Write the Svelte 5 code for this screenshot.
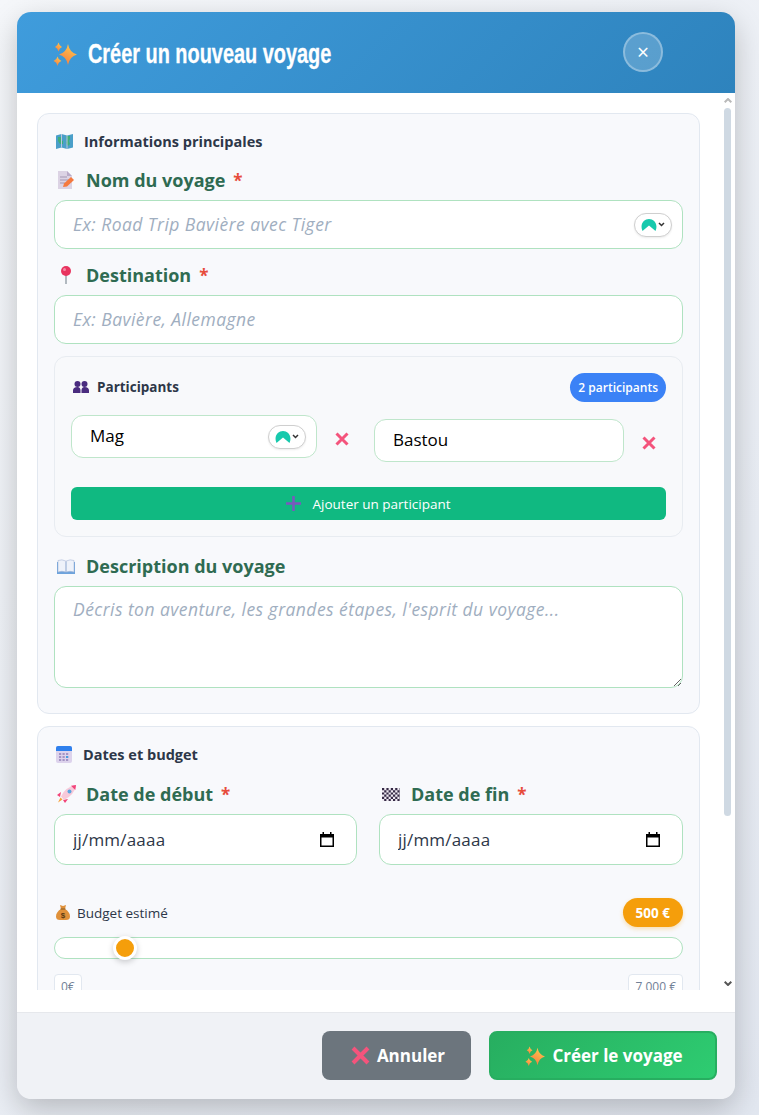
<script>
  let name = $state('');
  let destination = $state('');
  let description = $state('');
  let participants = $state(['Mag', 'Bastou']);
  let budget = $state(500);

  function removeParticipant(index) {
    participants = participants.filter((_, i) => i !== index);
  }
</script>

{#snippet sparkles(size)}
  <svg width={size} height={size} viewBox="0 0 24 24" aria-hidden="true">
    <defs>
      <linearGradient id="spark" x1="0.7" y1="0" x2="0.2" y2="1">
        <stop offset="0" stop-color="#ffc94f" />
        <stop offset="1" stop-color="#f5793f" />
      </linearGradient>
    </defs>
    <path fill="url(#spark)" d="M15 2Q16.500 10.500 24 12.500Q16.500 14.500 15 23Q13.500 14.500 6 12.500Q13.500 10.500 15 2Z" />
    <path fill="url(#spark)" d="M5.500 0.500Q6.300 4 9 5Q6.300 6 5.500 9.500Q4.700 6 2 5Q4.700 4 5.500 0.500Z" />
    <path fill="url(#spark)" d="M4.500 14.500Q5.300 18 8.500 19Q5.300 20 4.500 24Q3.700 20 0.500 19Q3.700 18 4.500 14.500Z" />
  </svg>
{/snippet}

{#snippet mapIcon()}
  <svg width="17" height="15" viewBox="0 0 17 15" aria-hidden="true">
    <path fill="#4a9fc9" d="M0 1.500 5.500 0 11 1.500 17 0V13.500L11 15 5.500 13.500 0 15Z" />
    <path fill="#3fae7a" d="M2 3h3v3l2 1v3H4L2 7ZM10 2h4v3l-1 2 1 3-2 2-2-3 1-3Z" />
    <path fill="#b9c6dd" d="M5 0h1v13.500H5ZM10.500 1.500h1V15h-1Z" />
  </svg>
{/snippet}

{#snippet memoIcon()}
  <svg width="16" height="18" viewBox="0 0 16 18" aria-hidden="true">
    <path fill="#dcd3e4" d="M0 0H9L14 5V18H0Z" />
    <path fill="#b9abc8" d="M9 0 14 5H9Z" />
    <path stroke="#a497b3" stroke-width="1" d="M2 6H9M2 9H11M2 12H7" />
    <path fill="#f5793f" d="M5 16 6 12.500 13 6 16 9 9 15.500Z" />
  </svg>
{/snippet}

{#snippet pinIcon()}
  <svg width="14" height="18" viewBox="0 0 14 18" aria-hidden="true">
    <path stroke="#9aa3ad" stroke-width="1.500" d="M7 8V18" />
    <circle cx="7" cy="5" r="5" fill="#e8345f" />
    <circle cx="5.500" cy="3.500" r="1.500" fill="#f58aa5" />
  </svg>
{/snippet}

{#snippet peopleIcon()}
  <svg width="16" height="12" viewBox="0 0 16 12" aria-hidden="true">
    <g fill="#4a2c7f">
      <circle cx="4.500" cy="3" r="3" />
      <circle cx="11.500" cy="3" r="3" />
      <path d="M0 12V9.500Q0 6 4.500 6 7.500 6 7.500 9.500V12ZM8.500 12V9.500Q8.500 6 11.500 6 16 6 16 9.500V12Z" />
    </g>
  </svg>
{/snippet}

{#snippet crossIcon(size)}
  <svg width={size} height={size} viewBox="0 0 14 14" aria-hidden="true">
    <path stroke="#f4547c" stroke-width="3" d="M1.500 1.500 12.500 12.500M12.500 1.500 1.500 12.500" />
  </svg>
{/snippet}

{#snippet bookIcon()}
  <svg width="18" height="15" viewBox="0 0 18 15" aria-hidden="true">
    <path fill="#6ea3dc" d="M0 3H18V15H0Z" />
    <path fill="#eef2fa" stroke="#a9b8d6" stroke-width="0.600" d="M1 1.500Q5 0 8.800 2V13Q5 11.500 1 13ZM17 1.500Q13 0 9.200 2V13Q13 11.500 17 13Z" />
  </svg>
{/snippet}

{#snippet calendarIcon()}
  <svg width="16" height="17" viewBox="0 0 16 17" aria-hidden="true">
    <rect width="16" height="17" rx="2" fill="#ddd3ec" />
    <path fill="#2f80ed" d="M2 0H14Q16 0 16 2V5H0V2Q0 0 2 0Z" />
    <g fill="#a494c4">
      {#each [7, 10, 13] as y}
        {#each [3, 6.500, 10] as x}
          <rect {x} {y} width="2.200" height="2" />
        {/each}
      {/each}
    </g>
    <rect x="10" y="10" width="2.200" height="2" fill="#4b9de0" />
  </svg>
{/snippet}

{#snippet rocketIcon()}
  <svg width="19" height="18" viewBox="0 0 19 18" aria-hidden="true">
    <path fill="#f2447a" d="M4 7 0 10 3 12ZM11 14 8 18 6 15Z" />
    <path fill="#f6a23c" d="M3.500 12.500 5.500 14.500 1 17.500Z" />
    <path fill="#f7c9d9" d="M4 11.500Q8 2 19 0 17.500 10 7 15Z" />
    <path fill="#f2447a" d="M14 .8 19 0 18.300 5Z" />
    <circle cx="12.500" cy="6.500" r="2" fill="#5aa6e0" />
  </svg>
{/snippet}

{#snippet flagIcon()}
  <svg width="18" height="13" viewBox="0 0 18 13" aria-hidden="true">
    <rect width="18" height="13" fill="#efeaf2" />
    <path stroke="#352a45" stroke-width="2.200" stroke-dasharray="2.200" d="M0 1.100H18M2.200 3.300H18M0 5.500H18M2.200 7.700H18M0 9.900H18M2.200 12.100H18" />
  </svg>
{/snippet}

{#snippet bagIcon()}
  <svg width="14" height="15" viewBox="0 0 14 15" aria-hidden="true">
    <path fill="#e0913a" d="M4 0 7 1 10 0 9 4Q14 7 14 11.500 14 15 10 15H4Q0 15 0 11.500 0 7 5 4Z" />
    <path fill="#8a5a20" d="M4.500 3.500H9.500V4.500H4.500Z" />
    <text x="7" y="13" text-anchor="middle" font-size="8" font-weight="700" font-family="Liberation Sans, sans-serif" fill="#5b3a12">$</text>
  </svg>
{/snippet}

{#snippet pluginPill()}
  <span class="pill">
    <svg width="16" height="12" viewBox="0 0 16 12" aria-hidden="true">
      <path fill="#17c9ad" d="M1.500 12C-1.500 5 3 0 8 0S17.500 5 14.500 12L8 6.500Z" />
    </svg>
    <svg width="7" height="5" viewBox="0 0 7 5" aria-hidden="true">
      <path fill="none" stroke="#333" stroke-width="1.500" d="M1 1 3.500 3.500 6 1" />
    </svg>
  </span>
{/snippet}

{#snippet calendarPicker()}
  <svg class="picker" width="14" height="15" viewBox="0 0 14 15" aria-hidden="true">
    <path fill="none" stroke="#000" stroke-width="1.500" d="M.750 2.750H13.250V14.250H.750Z" />
    <path fill="#000" d="M0 2H14V5.500H0ZM2.500 0H4V2H2.500ZM10 0H11.500V2H10Z" />
  </svg>
{/snippet}

<div class="modal">
  <header class="modal-header">
    <h1>{@render sparkles(24)}<span>Créer un nouveau voyage</span></h1>
    <button class="close" aria-label="Fermer">×</button>
  </header>

  <div class="modal-body">
    <div class="scroller">
      <section class="card">
        <h2>{@render mapIcon()}<span>Informations principales</span></h2>

        <label class="field-label" for="name">
          <i class="ico">{@render memoIcon()}</i>Nom du voyage <b>*</b>
        </label>
        <div class="field tall">
          <input id="name" bind:value={name} placeholder="Ex: Road Trip Bavière avec Tiger" />
          {@render pluginPill()}
        </div>

        <label class="field-label next" for="dest">
          <i class="ico">{@render pinIcon()}</i>Destination <b>*</b>
        </label>
        <div class="field tall">
          <input id="dest" bind:value={destination} placeholder="Ex: Bavière, Allemagne" />
        </div>

        <div class="participants">
          <div class="participants-head">
            <h3>{@render peopleIcon()}<span>Participants</span></h3>
            <span class="count">{participants.length} participants</span>
          </div>
          <div class="participants-grid">
            {#each participants as _, i}
              <div class="field person" class:shifted={i > 0}>
                <input bind:value={participants[i]} />
                {#if i === 0}{@render pluginPill()}{/if}
              </div>
              <button class="remove" class:shifted={i > 0} aria-label="Retirer" onclick={() => removeParticipant(i)}>
                {@render crossIcon(14)}
              </button>
            {/each}
          </div>
          <button class="add">
            <svg width="15" height="15" viewBox="0 0 15 15" aria-hidden="true">
              <path stroke="#7a58bd" stroke-width="2.500" d="M7.500 0V15M0 7.500H15" />
            </svg>
            Ajouter un participant
          </button>
        </div>

        <label class="field-label desc" for="desc">
          <i class="ico">{@render bookIcon()}</i>Description du voyage
        </label>
        <textarea id="desc" bind:value={description} placeholder="Décris ton aventure, les grandes étapes, l'esprit du voyage..."></textarea>
      </section>

      <section class="card second">
        <h2>{@render calendarIcon()}<span>Dates et budget</span></h2>

        <div class="dates">
          <div>
            <label class="field-label" for="start">
              <i class="ico">{@render rocketIcon()}</i>Date de début <b>*</b>
            </label>
            <div class="field date">
              <input id="start" placeholder="jj/mm/aaaa" />
              {@render calendarPicker()}
            </div>
          </div>
          <div>
            <label class="field-label" for="end">
              <i class="ico">{@render flagIcon()}</i>Date de fin <b>*</b>
            </label>
            <div class="field date">
              <input id="end" placeholder="jj/mm/aaaa" />
              {@render calendarPicker()}
            </div>
          </div>
        </div>

        <div class="budget-head">
          <span class="budget-label">{@render bagIcon()}Budget estimé</span>
          <span class="budget-value">{budget} €</span>
        </div>
        <input class="range" type="range" min="0" max="5200" step="1" bind:value={budget} />
        <div class="range-ends">
          <span>0€</span>
          <span>7 000 €</span>
        </div>
      </section>
    </div>

    <div class="scrollbar" aria-hidden="true">
      <svg class="arrow up" width="8" height="5" viewBox="0 0 8 5"><path fill="none" stroke="#b9b9b9" stroke-width="2" d="M.7 4.300 4 1 7.300 4.300" /></svg>
      <div class="thumb"></div>
      <svg class="arrow down" width="8" height="5" viewBox="0 0 8 5"><path fill="none" stroke="#555" stroke-width="2" d="M.7.700 4 4 7.300.700" /></svg>
    </div>
  </div>

  <footer class="modal-footer">
    <button class="btn cancel">{@render crossIcon(19)}Annuler</button>
    <button class="btn create">{@render sparkles(20)}Créer le voyage</button>
  </footer>
</div>

<style>
  :global(body) {
    background: linear-gradient(135deg, #f5f7fa 0%, #e2e7f0 100%);
    min-height: 100vh;
  }

  .modal {
    box-sizing: border-box;
    display: flex;
    flex-direction: column;
    width: 718px;
    height: 1087px;
    margin: 12px 0 16px 17px;
    background: #fff;
    border-radius: 16px;
    box-shadow: 0 10px 30px rgba(0, 0, 0, 0.22);
    font-family: 'Open Sans', 'Noto Sans', sans-serif;
    color: #2d3748;
  }

  button {
    font-family: inherit;
    cursor: pointer;
  }

  .modal-header {
    flex: none;
    display: flex;
    align-items: center;
    height: 81px;
    box-sizing: border-box;
    padding: 0 72px 0 36px;
    justify-content: space-between;
    background: linear-gradient(135deg, #3f9cdc 0%, #2e83bd 100%);
    border-radius: 14px 14px 0 0;
  }

  h1 {
    display: flex;
    align-items: center;
    gap: 11px;
    margin: 3px 0 0;
    font-family: 'Liberation Sans', sans-serif;
    font-size: 27px;
    font-weight: 700;
    color: #fff;
  }

  h1 span {
    transform: scaleX(0.737);
    transform-origin: left center;
    -webkit-text-stroke: 0.3px #fff;
  }

  .close {
    width: 40px;
    height: 40px;
    margin-top: -1px;
    padding: 0;
    border: 2px solid rgba(255, 255, 255, 0.3);
    border-radius: 50%;
    background: rgba(255, 255, 255, 0.2);
    color: #fff;
    font-size: 21px;
    line-height: 1;
  }

  .modal-body {
    position: relative;
    flex: 1;
    min-height: 0;
    padding: 20px 35px 22px 20px;
  }

  .scroller {
    height: 100%;
    overflow: hidden;
  }

  .scrollbar {
    position: absolute;
    top: 0;
    right: 4px;
    bottom: 22px;
    width: 7px;
  }

  .thumb {
    position: absolute;
    top: 15px;
    left: 0;
    width: 7px;
    height: 708px;
    border-radius: 4px;
    background: #cfd9e3;
  }

  .arrow {
    position: absolute;
    left: 0;
  }

  .arrow.up {
    top: 5px;
  }

  .arrow.down {
    bottom: 4px;
  }

  .card {
    box-sizing: border-box;
    padding: 16px 16px 25px;
    background: #f8f9fc;
    border: 1px solid #e2e8f0;
    border-radius: 12px;
  }

  .card.second {
    margin-top: 12px;
  }

  h2 {
    display: flex;
    align-items: center;
    gap: 11px;
    height: 22px;
    margin: 0 0 15px 2px;
    font-size: 14.500px;
    font-weight: 700;
    color: #2d3748;
  }

  .field-label {
    display: flex;
    align-items: center;
    height: 26px;
    margin-bottom: 7px;
    font-size: 18px;
    font-weight: 700;
    color: #2f6b52;
  }

  .field-label b {
    margin-left: 8px;
    color: #e74c3c;
    font-weight: 700;
    font-size: 17px;
  }

  .field-label.next {
    margin-top: 13px;
  }

  .field-label.desc {
    margin-top: 16px;
  }

  .ico {
    display: flex;
    justify-content: center;
    width: 24px;
    margin-right: 8px;
  }

  .field {
    display: flex;
    align-items: center;
    box-sizing: border-box;
    background: #fff;
    border: 1px solid #afe2c0;
    border-radius: 12px;
    padding: 0 10px 0 18px;
  }

  .field.tall {
    height: 49px;
  }

  .field input {
    flex: 1;
    min-width: 0;
    padding: 0 0 1px;
    border: 0;
    outline: 0;
    background: transparent;
    font: inherit;
    font-size: 17px;
    color: #000;
  }

  ::placeholder {
    color: #a0aec0;
    font-size: 17.500px;
    font-style: italic;
    letter-spacing: 0.45px;
    opacity: 1;
  }

  .pill {
    flex: none;
    display: flex;
    align-items: center;
    justify-content: center;
    gap: 1px;
    width: 38px;
    height: 24px;
    box-sizing: border-box;
    border: 1px solid #cfcfcf;
    border-radius: 12px;
    background: #fff;
    box-shadow: 0 1px 2px rgba(0, 0, 0, 0.08);
  }

  .participants {
    margin-top: 12px;
    padding: 16px;
    background: #f8f9fb;
    border: 1px solid #e8ecf1;
    border-radius: 12px;
  }

  .participants-head {
    display: flex;
    align-items: center;
    justify-content: space-between;
    margin-bottom: 13px;
  }

  h3 {
    display: flex;
    align-items: center;
    gap: 8px;
    margin: -2px 0 0 2px;
    font-size: 13.500px;
    font-weight: 700;
    color: #2d3748;
  }

  .count {
    height: 29px;
    box-sizing: border-box;
    padding: 0 8px;
    display: flex;
    align-items: center;
    border-radius: 15px;
    background: #3b82f6;
    color: #fff;
    font-size: 12px;
    font-weight: 600;
  }

  .participants-grid {
    display: grid;
    grid-template-columns: 246px 57px 250px 42px;
    align-items: start;
    margin-bottom: 25px;
  }

  .person {
    height: 43px;
    border-color: #bfe6cb;
  }

  .person input {
    padding-bottom: 3px;
  }

  .person.shifted {
    margin-top: 4px;
  }

  .remove {
    display: flex;
    justify-self: start;
    margin: 17px 0 0 18px;
    padding: 0;
    border: 0;
    background: none;
  }

  .remove.shifted {
    margin-top: 21px;
  }

  .add {
    display: flex;
    align-items: center;
    justify-content: center;
    gap: 11px;
    width: 100%;
    height: 33px;
    border: 0;
    border-radius: 6px;
    background: #10b981;
    color: #fff;
    font-size: 13.500px;
    font-weight: 500;
  }

  textarea {
    display: block;
    box-sizing: border-box;
    width: 100%;
    height: 102px;
    padding: 10px 18px;
    background: #fff;
    border: 1px solid #afe2c0;
    border-radius: 12px;
    outline: 0;
    font: inherit;
    font-size: 17.500px;
  }

  .dates {
    display: grid;
    grid-template-columns: 303px 304px;
    gap: 22px;
    padding-top: 1px;
  }

  .field.date {
    height: 51px;
  }

  .date ::placeholder {
    color: #2d3748;
    font-size: 17px;
    font-style: normal;
    letter-spacing: 0.2px;
  }

  .picker {
    flex: none;
    margin-right: 12px;
  }

  .budget-head {
    display: flex;
    align-items: center;
    justify-content: space-between;
    margin-top: 33px;
  }

  .budget-label {
    display: flex;
    align-items: center;
    gap: 7px;
    margin-left: 2px;
    font-size: 13.500px;
    font-weight: 500;
  }

  .budget-value {
    display: flex;
    align-items: center;
    height: 29px;
    padding: 0 13px;
    border-radius: 15px;
    background: #f59e0b;
    color: #fff;
    font-size: 13.500px;
    font-weight: 700;
    box-shadow: 0 2px 4px rgba(245, 158, 11, 0.3);
  }

  .range {
    appearance: none;
    display: block;
    box-sizing: border-box;
    width: 100%;
    height: 22px;
    margin: 10px 0 15px;
    background: #fff;
    border: 1px solid #afe2c0;
    border-radius: 11px;
    outline: 0;
  }

  .range::-webkit-slider-thumb {
    appearance: none;
    box-sizing: border-box;
    width: 24px;
    height: 24px;
    border: 3px solid #fff;
    border-radius: 50%;
    background: #f59e0b;
    box-shadow: 0 2px 6px rgba(0, 0, 0, 0.2);
  }

  .range-ends {
    display: flex;
    justify-content: space-between;
    font-size: 12px;
    color: #718096;
  }

  .range-ends span {
    padding: 3px 6px;
    background: #fff;
    border: 1px solid #e2e8f0;
    border-radius: 4px;
  }

  .modal-footer {
    flex: none;
    display: flex;
    justify-content: flex-end;
    gap: 18px;
    box-sizing: border-box;
    height: 87px;
    padding: 18px 18px 0;
    background: #f0f2f6;
    border-top: 1px solid #e6e8ec;
    border-radius: 0 0 14px 14px;
  }

  .btn {
    display: flex;
    align-items: center;
    justify-content: center;
    gap: 7px;
    height: 49px;
    padding: 0;
    border-radius: 8px;
    border: 0;
    color: #fff;
    font-size: 17px;
    font-weight: 700;
  }

  .cancel {
    width: 149px;
    padding-left: 3px;
    background: #6c757d;
  }

  .create {
    width: 228px;
    padding-left: 2px;
    background: linear-gradient(135deg, #27ae60 0%, #2ecc71 100%);
    border: 2px solid #27ae60;
  }
</style>
